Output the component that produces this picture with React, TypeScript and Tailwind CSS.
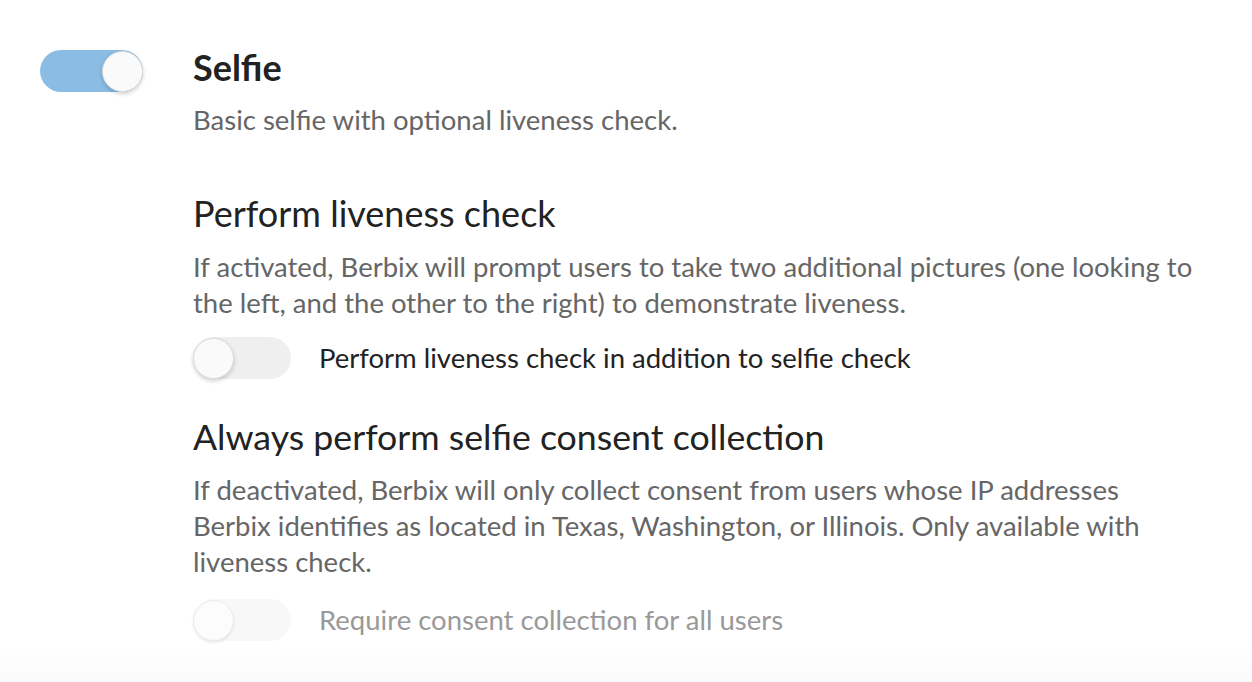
type ToggleProps = {
  checked: boolean;
  disabled?: boolean;
  size?: "lg" | "sm";
};

function Toggle({ checked, disabled, size = "sm" }: ToggleProps) {
  const track =
    size === "lg" ? "w-[103px] h-[42px]" : "w-[98px] h-[42px]";
  return (
    <div
      className={
        "relative shrink-0 rounded-full " +
        track +
        (checked
          ? " bg-[#8bbde4]"
          : disabled
            ? " bg-[#f8f8f8]"
            : " bg-[#efefef]")
      }
    >
      <div
        className={
          "absolute top-[1px] h-[41px] w-[41px] rounded-full border " +
          (checked ? "right-0" : "left-0") +
          (disabled
            ? " border-[#ececec] bg-[#fcfcfc] shadow-[0_2px_3px_rgba(0,0,0,0.08)]"
            : " border-[#dcdcdc] bg-[#fafafa] shadow-[0_2px_4px_rgba(0,0,0,0.18)]")
        }
      />
    </div>
  );
}

export default function App() {
  return (
    <div
      className="min-h-[682px] w-full bg-[linear-gradient(to_bottom,#ffffff_0,#ffffff_645px,#fafafa_682px)] text-[#222]"
      style={{ fontFamily: "Lato, 'Open Sans', sans-serif" }}
    >
      <div className="flex gap-[50px] pl-10 pt-[47px]">
        <div className="pt-[3px]">
          <Toggle checked size="lg" />
        </div>

        <div className="w-[1003px]">
          <h2 className="text-[36px] font-bold leading-[40px]">Selfie</h2>
          <p className="mt-[15px] text-[27.5px] leading-[36px] text-[#666]">
            Basic selfie with optional liveness check.
          </p>

          <h3 className="mt-[55px] text-[36px] leading-[40px]">
            Perform liveness check
          </h3>
          <p className="mt-[16px] text-[27.5px] leading-[36px] text-[#666]">
            If activated, Berbix will prompt users to take two additional
            pictures (one looking to the left, and the other to the right) to
            demonstrate liveness.
          </p>
          <div className="mt-[16px] flex items-center gap-[28px]">
            <Toggle checked={false} />
            <span className="text-[27.5px] leading-[36px] text-[#222]">
              Perform liveness check in addition to selfie check
            </span>
          </div>

          <h3 className="mt-[38px] text-[35.7px] leading-[40px]">
            Always perform selfie consent collection
          </h3>
          <p className="mt-[15px] text-[27.5px] leading-[36px] text-[#666]">
            If deactivated, Berbix will only collect consent from users whose
            IP addresses Berbix identifies as located in Texas, Washington, or
            Illinois. Only available with liveness check.
          </p>
          <div className="mt-[19px] flex items-center gap-[28px]">
            <Toggle checked={false} disabled />
            <span className="text-[27.5px] leading-[36px] text-[#999]">
              Require consent collection for all users
            </span>
          </div>
        </div>
      </div>
    </div>
  );
}
